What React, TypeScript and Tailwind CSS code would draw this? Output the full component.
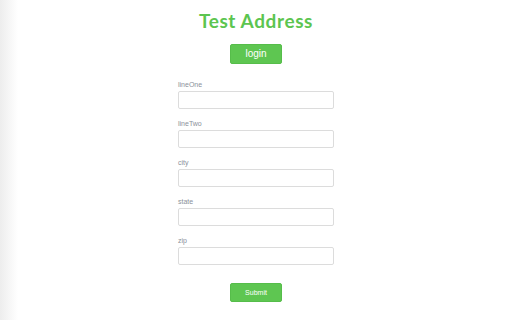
const fields = ["lineOne", "lineTwo", "city", "state", "zip"]

export default function App() {
  return (
    <div className="w-full h-[320px] bg-[linear-gradient(to_right,#ededed,#ffffff_18px)] font-['Liberation_Sans',sans-serif]">
      <div className="flex flex-col items-center pt-[9px]">
        <h1 className="text-[19px] leading-[24px] font-bold text-[#5cc550] font-['Lato',sans-serif] tracking-[0.6px]">
          Test Address
        </h1>
        <button className="mt-[11px] w-[52px] h-[20px] rounded-[2px] bg-[#5ec651] border border-[#56bd4a] text-white text-[10px] leading-none">
          login
        </button>
        <form className="mt-[17px] w-[156px] flex flex-col gap-[11px]">
          {fields.map((f) => (
            <div key={f} className="flex flex-col">
              <label className="text-[7px] leading-[7px] text-[#8b919b] mb-[3px]">{f}</label>
              <input className="h-[18px] w-full rounded-[2px] border border-[#dcdcdc] bg-white outline-none" />
            </div>
          ))}
        </form>
        <button className="mt-[18px] w-[52px] h-[19px] rounded-[2px] bg-[#5ec651] border border-[#56bd4a] text-white text-[7px] leading-none">
          Submit
        </button>
      </div>
    </div>
  )
}
